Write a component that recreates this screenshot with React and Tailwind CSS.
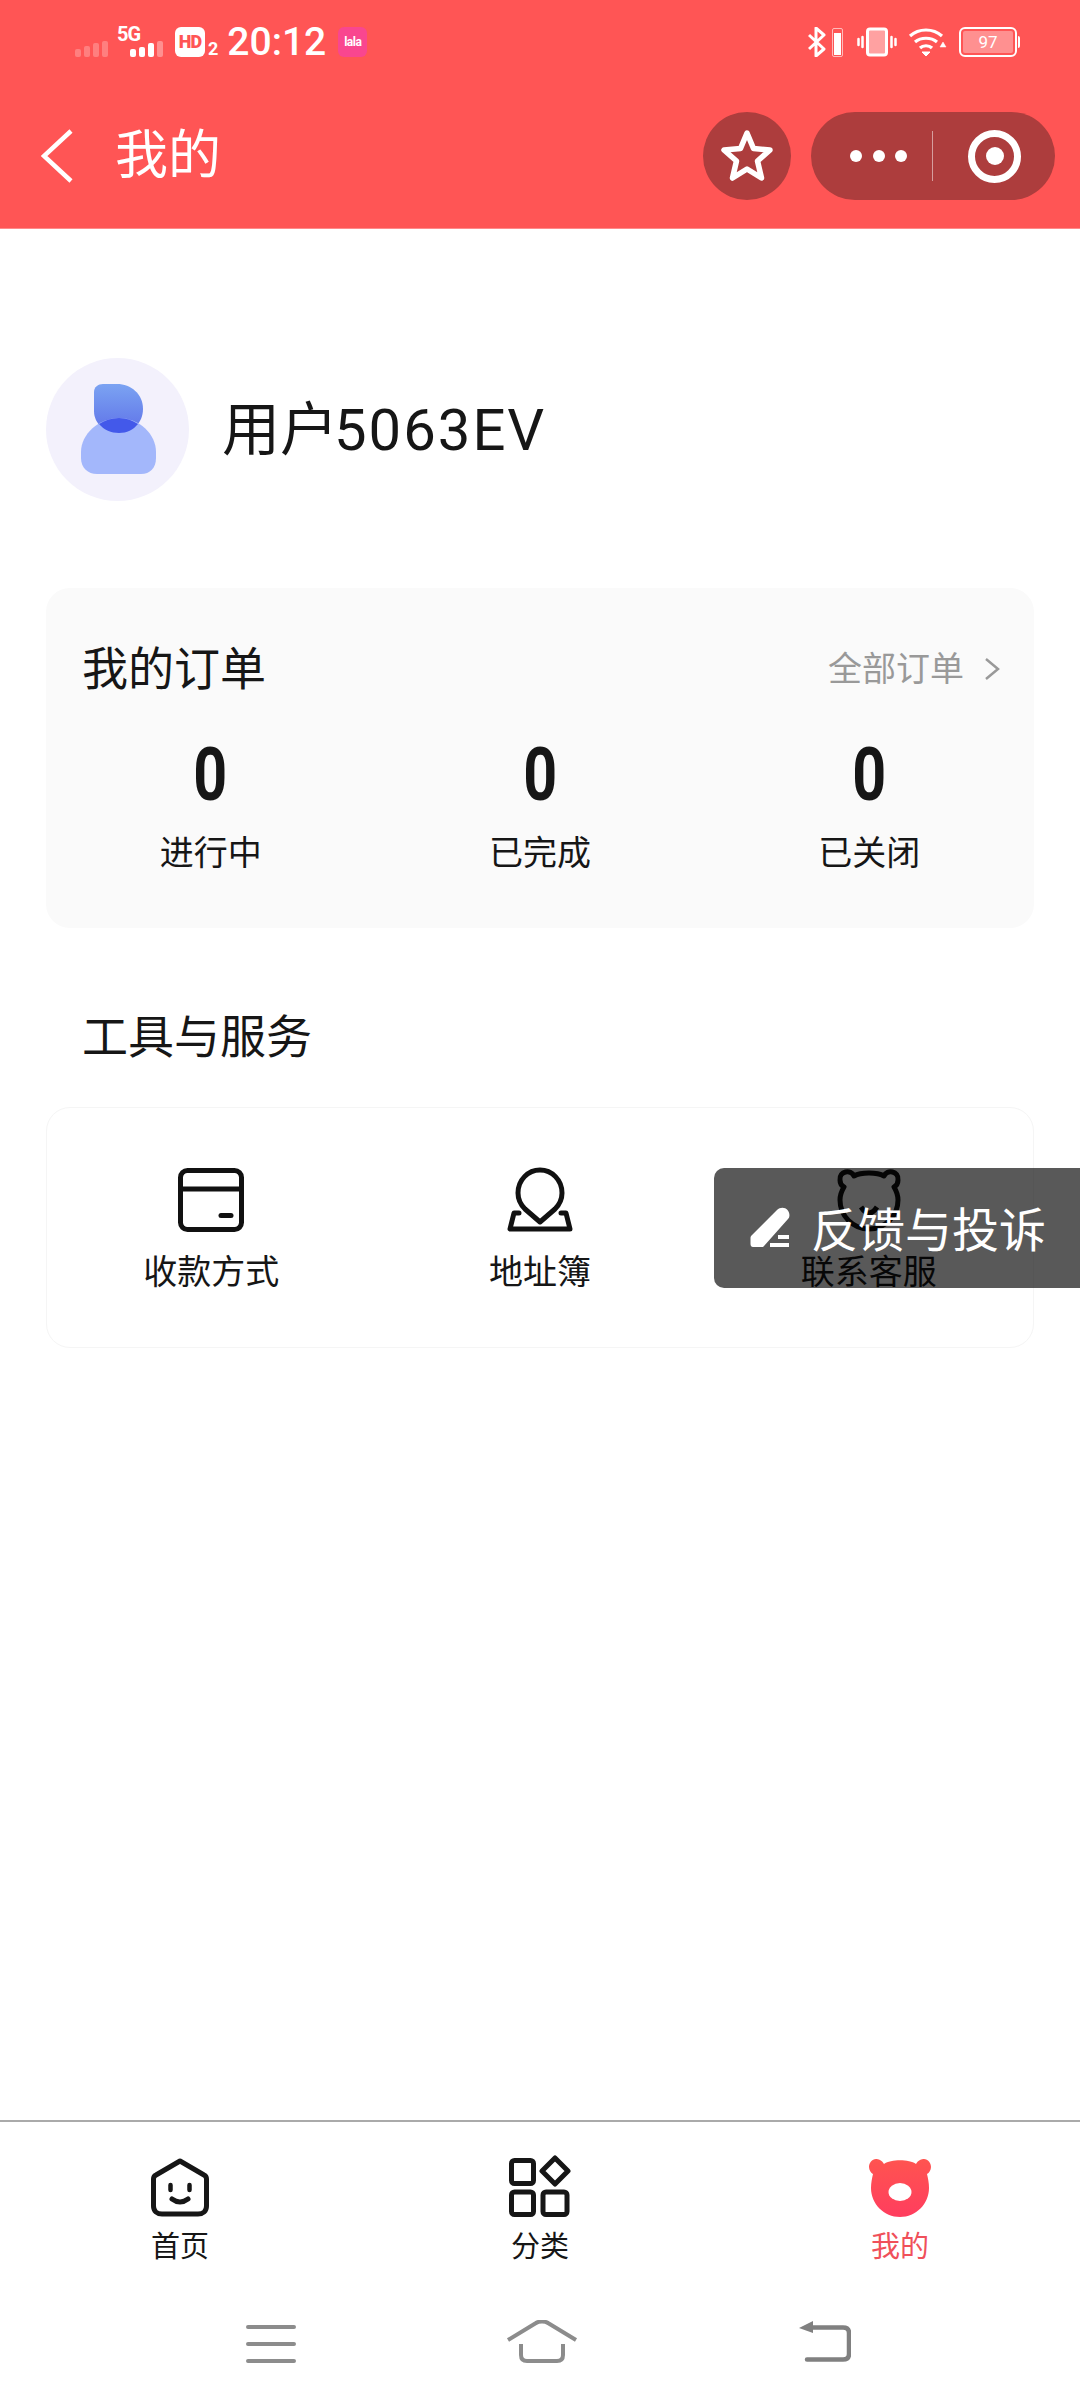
const bodyFont = "font-['Roboto','Noto_Sans_CJK_SC',sans-serif]"

function Signal({ bars }) {
  return (
    <div className="flex items-end gap-[3px]">
      {bars.map((b, i) => (
        <div key={i} className="w-[6px] rounded-[2px] bg-white" style={{ height: b.h, opacity: b.o }} />
      ))}
    </div>
  )
}

function StatusBar() {
  return (
    <div className="flex items-start pt-[27px] h-[70px] text-white">
      <div className="ml-[75px] mt-[14px]">
        <Signal bars={[{ h: 8, o: 0.25 }, { h: 11, o: 0.25 }, { h: 14, o: 0.25 }, { h: 16, o: 0.25 }]} />
      </div>
      <div className="relative ml-[22px] w-[35px] h-[30px]">
        <span className="absolute left-[-13px] top-[-3px] text-[20px] leading-[20px] font-bold tracking-[-1px]">5G</span>
        <div className="absolute left-0 bottom-0">
          <Signal bars={[{ h: 8, o: 1 }, { h: 10, o: 1 }, { h: 14, o: 1 }, { h: 16, o: 0.35 }]} />
        </div>
      </div>
      <div className="ml-[10px] flex h-[30px] w-[30px] items-center justify-center rounded-[6px] bg-white text-[18px] font-black leading-none tracking-[-1px] text-[#ff5555]">
        HD
      </div>
      <span className="ml-[3px] mt-[13px] text-[18px] font-bold leading-[18px]">2</span>
      <span className="ml-[9px] mt-[-5px] text-[39px] leading-[40px] font-medium">20:12</span>
      <div className="ml-[12px] flex h-[30px] w-[29px] items-center justify-center rounded-[6px] bg-[#f9468f] text-[12px] font-bold leading-none tracking-[-0.5px]">
        lala
      </div>
      <div className="ml-auto flex items-center">
        <svg width="18" height="30" viewBox="0 0 18 30" fill="none" stroke="white" strokeWidth="3">
          <path d="M1 8 L16 22 L8 29 V1 L16 8 L1 22" strokeLinejoin="round" />
        </svg>
        <div className="ml-[6px] flex h-[29px] w-[11px] flex-col justify-end rounded-[2px] border border-white/60 p-[1px]">
          <div className="h-[22px] bg-white" />
        </div>
        <svg className="ml-[14px]" width="40" height="30" viewBox="0 0 40 30" fill="none" stroke="white">
          <rect x="10.5" y="2" width="19" height="26" rx="2.5" strokeWidth="3" fill="white" fillOpacity="0.45" />
          <path d="M5.5 10v10M1.5 12v6M34.5 10v10M38.5 12v6" strokeWidth="2.5" strokeLinecap="round" />
        </svg>
        <svg className="ml-[11px]" width="39" height="30" viewBox="0 0 39 30" fill="none" stroke="white" strokeWidth="3.2">
          <path d="M2 9 C11 1 25 1 34 9" />
          <path d="M7 15 C13 10 23 10 29 15" />
          <path d="M12 21 C15 18 21 18 24 21" />
          <path d="M14 25 L18 29 L22 25 Z" fill="white" strokeWidth="1" />
          <path d="M32 20 L38 20 L35 15 Z" fill="white" strokeWidth="0.5" />
        </svg>
        <div className="ml-[12px] flex h-[30px] w-[58px] items-center rounded-[6px] border-[2.5px] border-white p-[2px]">
          <div className="flex h-full flex-1 items-center justify-center rounded-[2px] bg-white/35 text-[17px] leading-none">97</div>
        </div>
        <div className="ml-[1px] mr-[60px] h-[12px] w-[2px] rounded-r-[2px] bg-white" />
      </div>
    </div>
  )
}

function TitleBar() {
  return (
    <div className="flex h-[88px] mt-[42px] items-center text-white">
      <svg className="ml-[41px]" width="32" height="54" viewBox="0 0 32 54" fill="none" stroke="white" strokeWidth="4.5">
        <path d="M30 2 L3 27 L30 52" />
      </svg>
      <span className="ml-[42px] text-[53px] leading-none font-normal">我的</span>
      <div className="ml-auto flex h-[88px] w-[88px] items-center justify-center rounded-full bg-[#ad3d3d]">
        <svg width="54" height="54" viewBox="0 0 54 54" fill="none" stroke="white" strokeWidth="5.5" strokeLinejoin="round">
          <path d="M27 4 L33.5 19.5 L50 21 L37.5 32 L41.5 49 L27 40 L12.5 49 L16.5 32 L4 21 L20.5 19.5 Z" />
        </svg>
      </div>
      <div className="ml-[20px] mr-[25px] flex h-[88px] w-[244px] items-center rounded-full bg-[#ad3d3d]">
        <div className="ml-[39px] flex gap-[10.5px]">
          <div className="h-[12px] w-[12px] rounded-full bg-white" />
          <div className="h-[12px] w-[12px] rounded-full bg-white" />
          <div className="h-[12px] w-[12px] rounded-full bg-white" />
        </div>
        <div className="ml-[25px] h-[50px] w-[1px] bg-white/50" />
        <div className="ml-[35px] flex h-[53px] w-[53px] items-center justify-center rounded-full border-[7px] border-white">
          <div className="h-[18px] w-[18px] rounded-full bg-white" />
        </div>
      </div>
    </div>
  )
}

function Avatar() {
  return (
    <div className="flex h-[143px] w-[143px] items-center justify-center rounded-full bg-[#f3f1fc]">
      <svg className="ml-[2px] mt-[-2px]" width="76" height="90" viewBox="0 0 76 90">
        <defs>
          <linearGradient id="head" x1="0" y1="0" x2="0" y2="1">
            <stop offset="0" stopColor="#7ba3f2" />
            <stop offset="1" stopColor="#5f72e8" />
          </linearGradient>
        </defs>
        <path d="M13 8 C13 3 17 0 22 0 H36 C50 0 62 10 62 25 C62 39 51 49 38 49 C24 49 13 40 13 27 Z" fill="url(#head)" />
        <path d="M38 34 C58 34 75 50 75 68 V74 C75 84 69 90 60 90 H16 C7 90 0 84 0 74 V68 C0 50 18 34 38 34 Z" fill="#a3b7fb" />
        <path d="M18 40 C24 36 31 34 38 34 C45 34 51 36 57 40 C52 46 46 49 38 49 C30 49 23 46 18 40 Z" fill="#4359ea" />
      </svg>
    </div>
  )
}

function Stat({ label }) {
  return (
    <div className="flex flex-col items-center">
      <span className="scale-x-[0.8] text-[74px] leading-[72px] font-bold text-[#161616]">0</span>
      <span className="mt-[22px] text-[34px] leading-[40px] text-[#161616]">{label}</span>
    </div>
  )
}

function ToolItem({ icon, label }) {
  return (
    <div className="flex flex-col items-center">
      <div className="flex h-[66px] items-center justify-center">{icon}</div>
      <span className="mt-[19px] text-[34px] leading-[40px] text-[#161616]">{label}</span>
    </div>
  )
}

function TabItem({ icon, label, active }) {
  return (
    <div className="flex flex-col items-center">
      <div className="flex h-[62px] items-end justify-center">{icon}</div>
      <span className={`mt-[13px] text-[29px] leading-[34px] ${active ? 'text-[#f0505a]' : 'text-[#161616]'}`}>{label}</span>
    </div>
  )
}

export default function App() {
  return (
    <div className={`relative flex h-[2408px] w-[1080px] flex-col overflow-hidden bg-white ${bodyFont}`}>
      <header className="h-[229px] shrink-0 border-b border-[#ff8a8a] bg-[#ff5555]">
        <StatusBar />
        <TitleBar />
      </header>

      <main className="flex-1 px-[46px]">
        <div className="mt-[129px] flex items-center">
          <Avatar />
          <span className="ml-[33px] text-[58px] leading-none text-[#161616]">
            用户<span className="ml-[-4px] tracking-[2px]">5063EV</span>
          </span>
        </div>

        <section className="mt-[87px] h-[340px] rounded-[24px] bg-[#fafafa]">
          <div className="flex items-center justify-between pt-[51px] pl-[36px] pr-[34px]">
            <span className="text-[46px] leading-[60px] text-[#161616]">我的订单</span>
            <div className="flex items-center gap-[20px]">
              <span className="text-[34px] leading-[40px] text-[#999999]">全部订单</span>
              <svg width="16" height="24" viewBox="0 0 16 24" fill="none" stroke="#999999" strokeWidth="2.5">
                <path d="M2 2 L14 12 L2 22" />
              </svg>
            </div>
          </div>
          <div className="mt-[40px] grid grid-cols-3">
            <Stat label="进行中" />
            <Stat label="已完成" />
            <Stat label="已关闭" />
          </div>
        </section>

        <h2 className="mt-[79px] pl-[36px] text-[46px] leading-[60px] text-[#161616]">工具与服务</h2>

        <section className="mt-[40px] h-[241px] rounded-[24px] border border-[#f5f5f5] pt-[59px]">
          <div className="grid grid-cols-3">
            <ToolItem
              label="收款方式"
              icon={
                <svg width="66" height="64" viewBox="0 0 66 64" fill="none" stroke="#111111" strokeWidth="5">
                  <rect x="2.5" y="2.5" width="61" height="59" rx="7" />
                  <path d="M2.5 21 H63.5" />
                  <path d="M43 47.5 H53" strokeLinecap="round" />
                </svg>
              }
            />
            <ToolItem
              label="地址簿"
              icon={
                <svg width="66" height="66" viewBox="0 0 66 66" fill="none" stroke="#111111" strokeWidth="5" strokeLinejoin="round" strokeLinecap="round">
                  <path d="M33 3 C45 3 55 13 55 26 C55 33 52 38 48 42 L33 55 L18 42 C14 38 11 33 11 26 C11 13 21 3 33 3 Z" />
                  <path d="M12 46 H7 L3 62 H63 L59 46 H54" />
                </svg>
              }
            />
            <ToolItem
              label="联系客服"
              icon={
                <svg width="66" height="66" viewBox="0 0 66 66" fill="none" stroke="#111111" strokeWidth="5" strokeLinejoin="round">
                  <path d="M18 9 C25 5 41 5 48 9 C51 2 63 4 62 13 C62 17 60 19 58 20 C61 25 62 29 62 33 C62 49 49 62 33 62 C17 62 4 49 4 33 C4 29 5 25 8 20 C6 19 4 17 4 13 C3 4 15 2 18 9 Z" />
                  <path d="M25 40 Q33 52 41 40" />
                </svg>
              }
            />
          </div>
        </section>
      </main>

      <footer className="h-[288px] shrink-0 border-t-2 border-[#aaaaaa] bg-white">
        <div className="grid grid-cols-3 pt-[33px]">
          <TabItem
            label="首页"
            icon={
              <svg width="58" height="59" viewBox="0 0 58 59" fill="none" stroke="#161616" strokeWidth="5" strokeLinejoin="round">
                <path d="M29 3 L53 17 C55 18 55.5 19 55.5 21 V48 C55.5 53 52 56 47 56 H11 C6 56 2.5 53 2.5 48 V21 C2.5 19 3 18 5 17 Z" />
                <path d="M24 27 V32 M43 27 V32" strokeLinecap="round" strokeWidth="4.5" transform="translate(-4.5 0)" />
                <path d="M21 41 Q29 47 37 41" strokeLinecap="round" />
              </svg>
            }
          />
          <TabItem
            label="分类"
            icon={
              <svg width="62" height="62" viewBox="0 0 62 62" fill="none" stroke="#161616" strokeWidth="5" strokeLinejoin="round">
                <rect x="2.5" y="5.5" width="22" height="23" rx="3" />
                <rect x="2.5" y="37" width="22" height="22.5" rx="3" />
                <rect x="34" y="37" width="24" height="22.5" rx="3" />
                <path d="M46 3 L59 16 L46 29 L33 16 Z" />
              </svg>
            }
          />
          <TabItem
            active
            label="我的"
            icon={
              <svg width="62" height="58" viewBox="0 0 62 58">
                <defs>
                  <linearGradient id="bear" x1="0" y1="0" x2="0" y2="1">
                    <stop offset="0" stopColor="#ff5450" />
                    <stop offset="1" stopColor="#ff3d5e" />
                  </linearGradient>
                </defs>
                <path
                  d="M15 5 C22 0 40 0 47 5 C49 1 53 0 55 0 C59 0 62 4 62 8 C62 11 60 14 58 15 C59 19 60 24 60 29 C60 45 47 58 31 58 C15 58 2 45 2 29 C2 24 3 19 4 15 C2 14 0 11 0 8 C0 4 3 0 7 0 C9 0 13 1 15 5 Z"
                  fill="url(#bear)"
                />
                <ellipse cx="31" cy="33" rx="11.5" ry="9" fill="white" />
              </svg>
            }
          />
        </div>
        <div className="mt-[56px] flex items-start">
          <svg className="ml-[246px] mt-[3px]" width="50" height="42" viewBox="0 0 50 42" fill="none" stroke="#8c8c8c" strokeWidth="4" strokeLinecap="round">
            <path d="M2 4 H48 M2 21 H48 M2 38 H48" />
          </svg>
          <svg className="ml-[210px]" width="72" height="44" viewBox="0 0 72 44" fill="none" stroke="#8c8c8c" strokeWidth="4">
            <path d="M2 20 L30 3 C33 1 39 1 42 3 L70 20" />
            <path d="M15 24 V35 C15 39 17 41 21 41 H51 C55 41 57 39 57 35 V24" />
          </svg>
          <svg className="ml-[221px]" width="52" height="42" viewBox="0 0 52 42" fill="none" stroke="#808080" strokeWidth="4.5">
            <path d="M8 7.5 H44 C48 7.5 50 9.5 50 13 V34 C50 38 48 39.5 44 39.5 H8" strokeLinecap="round" />
            <path d="M0 8 L14 1 V13 Z" fill="#808080" stroke="none" />
          </svg>
        </div>
      </footer>

      {/* 悬浮的反馈按钮，盖在联系客服上面 */}
      <div className="absolute left-[714px] top-[1168px] flex h-[120px] w-[366px] items-center rounded-l-[10px] bg-black/65 pl-[36px]">
        <svg width="40" height="42" viewBox="0 0 40 42" fill="white">
          <path d="M27 3 C30 0 35 0 37.5 3 C40 6 40 10 38 12 L14 39 C13.5 40 12.5 40 11.5 40 H3 C1.5 40 0.5 39 0.5 37 V31 C0.5 30 1 29 1.5 28.5 Z" />
          <rect x="28" y="28" width="11" height="4" />
          <rect x="20" y="36" width="19" height="4" />
        </svg>
        <span className="ml-[21px] mt-[4px] text-[47px] leading-none font-normal text-white">反馈与投诉</span>
      </div>
    </div>
  )
}
